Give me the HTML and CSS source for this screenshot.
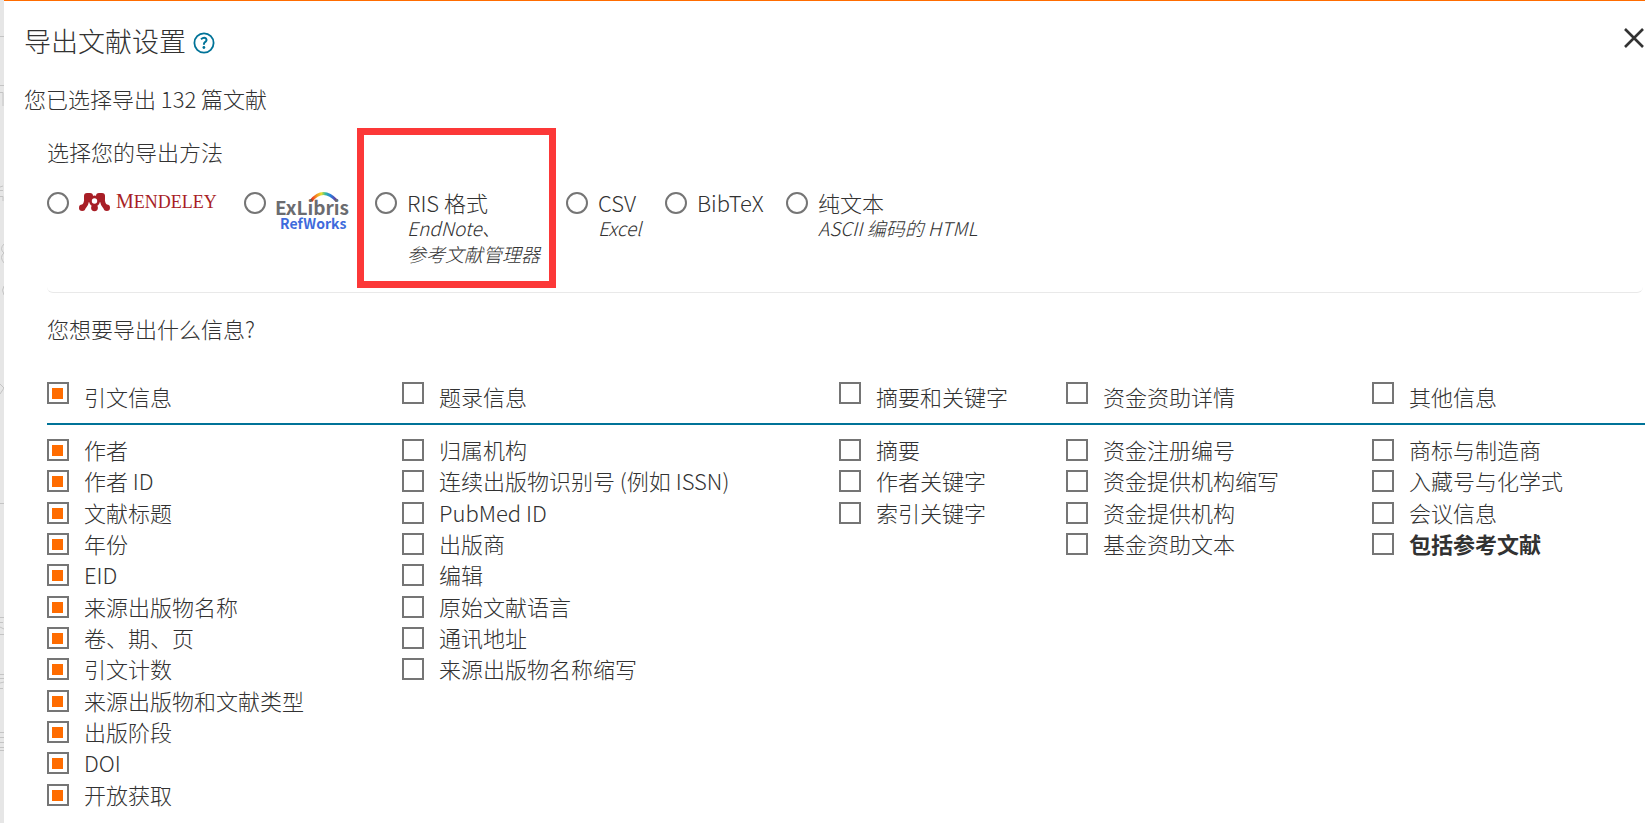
FILE: index.html
```html
<!DOCTYPE html>
<html lang="zh-CN">
<head>
<meta charset="utf-8">
<meta name="viewport" content="width=device-width, initial-scale=1">
<title>导出文献设置</title>
<link rel="stylesheet" href="styles.css">
</head>
<body>
<div class="page">
  <svg class="backdrop" width="4" height="823" viewBox="0 0 4 823" fill="none" stroke="#c4c4c4" aria-hidden="true">
    <path d="M0 36.500H4M0 85.500H4M0 503.500H4M0 92.500H3V106M0 187l3-1M0 190.500H3M0 196.500H3V201M4 244q-5 5 0 9q-5 4 0 10M4 286q-3 4 0 9M0 384l4 4l-4 6M0 617.500H4M0 622.500H3M0 627l4 2M0 634.500H4M0 674.500H4M0 678.500H4M0 683l4-1M0 688.500H3M0 732.500H4M0 737.500H4M0 742.500H4M0 747.500H4M0 750.500H4"/>
  </svg>
  <main class="dialog">
    <header class="dialog-header">
      <h1 class="title">导出文献设置</h1>
      <button class="icon-button help" type="button" aria-label="帮助">
        <svg width="22" height="22" viewBox="0 0 22 22" fill="none" stroke="#007398">
          <circle cx="11" cy="11" r="9.600" stroke-width="1.800"/>
          <path d="M8 7.300Q11 4.800 13 6.500Q14.500 8.700 11.800 10.300Q10.900 11 10.900 12.700" stroke-width="2"/>
          <circle cx="10.900" cy="15.500" r="1.400" fill="#007398" stroke="none"/>
        </svg>
      </button>
      <button class="icon-button close" type="button" aria-label="关闭">
        <svg width="20" height="20" viewBox="0 0 20 20" fill="none" stroke="#333" stroke-width="2.600">
          <path d="M1 1L19 19M19 1L1 19"/>
        </svg>
      </button>
    </header>
    <p class="summary">您已选择导出 132 篇文献</p>
    <form class="form">
      <section class="methods" aria-labelledby="method-title">
        <h2 class="section-title" id="method-title">选择您的导出方法</h2>
        <div class="method-list">
          <label class="method"><input class="radio" type="radio" name="method" aria-label="Mendeley">
            <svg class="logo" width="138" height="24" viewBox="0 0 138 24">
              <g fill="#a81e26">
                <path d="M8 5Q8 13 3 16M23 5Q23 13 28 16" fill="none" stroke="#a81e26" stroke-width="5"/>
                <rect x="5" y="1" width="9" height="9" rx="3"/><rect x="17" y="1" width="9" height="9" rx="3"/>
                <circle cx="15.500" cy="9" r="5.500"/>
                <path d="M14 12H17V16H14Z"/>
                <circle cx="3.200" cy="15.800" r="3.200"/><circle cx="15.500" cy="15.800" r="3.400"/><circle cx="27.800" cy="15.800" r="3.200"/>
              </g>
              <circle cx="15.500" cy="9" r="2.700" fill="#fff"/>
              <text class="mendeley-text" x="37" y="16" font-size="20">M<tspan font-size="18">ENDELEY</tspan></text>
            </svg>
          </label>
          <label class="method"><input class="radio" type="radio" name="method" aria-label="ExLibris RefWorks">
            <svg class="logo" width="74" height="40" viewBox="0 0 74 40">
              <defs><linearGradient id="rainbow" x1="0" x2="1" y1="0" y2="0"><stop offset="0" stop-color="#e52320"/><stop offset=".2" stop-color="#f48b20"/><stop offset=".4" stop-color="#e5df31"/><stop offset=".55" stop-color="#35bd9a"/><stop offset=".75" stop-color="#287edf"/><stop offset="1" stop-color="#713094"/></linearGradient></defs>
              <path d="M35 9Q47-6 61 9" fill="none" stroke="url(#rainbow)" stroke-width="3"/>
              <text class="exlibris-text" x="-1" y="23" font-size="19">ExLibris</text>
              <text class="refworks-text" x="4" y="37" font-size="14">RefWorks</text>
            </svg>
          </label>
          <label class="method highlighted"><input class="radio" type="radio" name="method">
            <span class="method-text">RIS 格式<em class="note">EndNote、<br>参考文献管理器</em></span>
          </label>
          <label class="method"><input class="radio" type="radio" name="method">
            <span class="method-text">CSV<em class="note">Excel</em></span>
          </label>
          <label class="method"><input class="radio" type="radio" name="method">
            <span class="method-text">BibTeX</span>
          </label>
          <label class="method"><input class="radio" type="radio" name="method">
            <span class="method-text">纯文本<em class="note">ASCII 编码的 HTML</em></span>
          </label>
        </div>
      </section>
      <h2 class="section-title fields-title">您想要导出什么信息?</h2>
      <div class="groups">
        <section class="group">
          <label class="option group-head"><input class="box" type="checkbox" checked>引文信息</label>
          <div class="options">
            <label class="option"><input class="box" type="checkbox" checked>作者</label>
            <label class="option"><input class="box" type="checkbox" checked>作者 ID</label>
            <label class="option"><input class="box" type="checkbox" checked>文献标题</label>
            <label class="option"><input class="box" type="checkbox" checked>年份</label>
            <label class="option"><input class="box" type="checkbox" checked>EID</label>
            <label class="option"><input class="box" type="checkbox" checked>来源出版物名称</label>
            <label class="option"><input class="box" type="checkbox" checked>卷、期、页</label>
            <label class="option"><input class="box" type="checkbox" checked>引文计数</label>
            <label class="option"><input class="box" type="checkbox" checked>来源出版物和文献类型</label>
            <label class="option"><input class="box" type="checkbox" checked>出版阶段</label>
            <label class="option"><input class="box" type="checkbox" checked>DOI</label>
            <label class="option"><input class="box" type="checkbox" checked>开放获取</label>
          </div>
        </section>
        <section class="group">
          <label class="option group-head"><input class="box" type="checkbox">题录信息</label>
          <div class="options">
            <label class="option"><input class="box" type="checkbox">归属机构</label>
            <label class="option"><input class="box" type="checkbox">连续出版物识别号 (例如 ISSN)</label>
            <label class="option"><input class="box" type="checkbox">PubMed ID</label>
            <label class="option"><input class="box" type="checkbox">出版商</label>
            <label class="option"><input class="box" type="checkbox">编辑</label>
            <label class="option"><input class="box" type="checkbox">原始文献语言</label>
            <label class="option"><input class="box" type="checkbox">通讯地址</label>
            <label class="option"><input class="box" type="checkbox">来源出版物名称缩写</label>
          </div>
        </section>
        <section class="group">
          <label class="option group-head"><input class="box" type="checkbox">摘要和关键字</label>
          <div class="options">
            <label class="option"><input class="box" type="checkbox">摘要</label>
            <label class="option"><input class="box" type="checkbox">作者关键字</label>
            <label class="option"><input class="box" type="checkbox">索引关键字</label>
          </div>
        </section>
        <section class="group">
          <label class="option group-head"><input class="box" type="checkbox">资金资助详情</label>
          <div class="options">
            <label class="option"><input class="box" type="checkbox">资金注册编号</label>
            <label class="option"><input class="box" type="checkbox">资金提供机构缩写</label>
            <label class="option"><input class="box" type="checkbox">资金提供机构</label>
            <label class="option"><input class="box" type="checkbox">基金资助文本</label>
          </div>
        </section>
        <section class="group">
          <label class="option group-head"><input class="box" type="checkbox">其他信息</label>
          <div class="options">
            <label class="option"><input class="box" type="checkbox">商标与制造商</label>
            <label class="option"><input class="box" type="checkbox">入藏号与化学式</label>
            <label class="option"><input class="box" type="checkbox">会议信息</label>
            <label class="option strong"><input class="box" type="checkbox">包括参考文献</label>
          </div>
        </section>
      </div>
    </form>
  </main>
</div>
</body>
</html>
```

FILE: styles.css
```css
*,
*::after { box-sizing: border-box; }

body {
  margin: 0;
  background: #fff;
  color: #323232;
  font-family: "Noto Sans CJK SC", "Noto Sans", sans-serif;
  font-size: 22px;
  font-weight: 300;
  line-height: 28px;
}

.page {
  display: flex;
  min-height: 100vh;
}

.backdrop {
  flex: none;
  width: 4px;
  background: #e6e6e6;
}

.dialog {
  display: flex;
  flex: 1;
  flex-direction: column;
  min-width: 0;
  border-top: 1px solid #ff6c00;
}

.dialog-header {
  display: flex;
  align-items: center;
  gap: 7px;
  padding: 22px 1px 0 20px;
}

.title {
  margin: 0;
  font-size: 27px;
  font-weight: 300;
  line-height: 36px;
}

.icon-button {
  display: flex;
  padding: 0;
  border: 0;
  background: none;
}

.help { margin-top: 4px; }

.close {
  align-self: flex-start;
  margin: 5px 0 0 auto;
}

.summary {
  margin: 25px 0 0;
  padding-left: 20px;
}

.form {
  display: flex;
  flex: 1;
  flex-direction: column;
  padding-left: 43px;
}

.methods {
  margin-top: 25px;
  margin-right: 2px;
  padding-bottom: 25px;
  border-bottom: 1px solid #e9e9e9;
  border-radius: 0 0 6px 6px;
}

.section-title {
  margin: 0;
  font-size: 22px;
  font-weight: 300;
  line-height: 28px;
}

.method-list {
  display: grid;
  grid-template-columns: 197px 131px 191px 99px 121px auto;
  margin-top: 27px;
}

.method {
  display: flex;
  align-items: flex-start;
  gap: 10px;
  white-space: nowrap;
}

.radio,
.box {
  flex: none;
  width: 22px;
  height: 22px;
  margin: 0;
  border: 2px solid #757575;
  background: #fff;
  appearance: none;
}

.radio { border-radius: 50%; }

.radio:checked { background: #ff6c00; }

.box:checked {
  background: linear-gradient(#ff6c00, #ff6c00) 3px 4px / 11px 11px no-repeat;
}

.method-text { line-height: 20px; }

.note {
  display: block;
  margin-top: 3px;
  font-size: 19px;
  line-height: 26px;
}

.logo { overflow: visible; }

.mendeley-text {
  fill: #a81e26;
  font-family: "Liberation Serif", serif;
  font-weight: 400;
}

.exlibris-text {
  fill: #6b6c70;
  font-family: "Noto Sans CJK SC", sans-serif;
  font-weight: 700;
}

.refworks-text {
  fill: #3e6bdc;
  font-family: "Noto Sans CJK SC", sans-serif;
  font-weight: 700;
}

.highlighted { position: relative; }

.highlighted::after {
  position: absolute;
  top: -64px;
  left: -18px;
  width: 199px;
  height: 160px;
  border: 7px solid #fc3838;
  content: "";
  pointer-events: none;
}

.fields-title { margin-top: 21px; }

.groups {
  display: grid;
  flex: 1;
  grid-template-columns: 355fr 437fr 227fr 306fr 273fr;
  margin-top: 40px;
}

.group {
  display: flex;
  flex-direction: column;
}

.option {
  display: flex;
  gap: 15px;
  line-height: 20px;
  white-space: nowrap;
}

.group-head {
  padding-bottom: 13px;
  border-bottom: 2px solid #007398;
  line-height: 28px;
}

.options {
  display: grid;
  flex: 1;
  grid-template-rows: repeat(12, minmax(28px, 1fr));
  padding: 14px 0 8px;
}

.strong { font-weight: 700; }
```
